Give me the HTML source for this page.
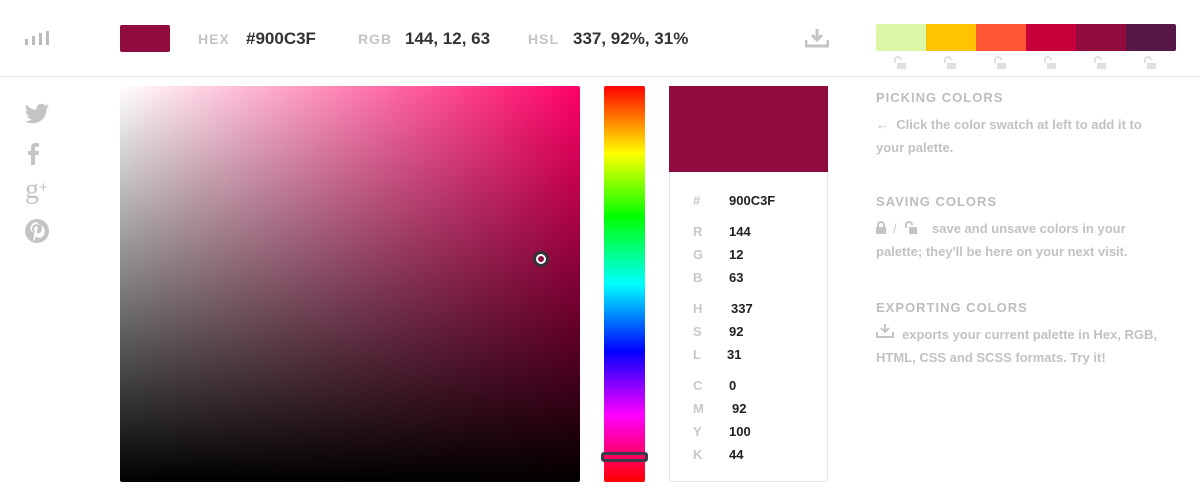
<!DOCTYPE html><html><head><style>
*{margin:0;padding:0;box-sizing:border-box}
body{width:1200px;height:498px;background:#fff;font-family:"Liberation Sans",sans-serif;position:relative;overflow:hidden}
.a{position:absolute}
.hdr{left:0;top:0;width:1200px;height:77px;border-bottom:1px solid #e6e6e6}
.lbl{color:#c4c4c4;font-weight:bold;font-size:14px;letter-spacing:1px}
.val{color:#333;font-weight:bold;font-size:17px}
.r{font-size:13px;font-weight:bold}
.r .k{position:absolute;left:24px;color:#c8c8c8}
.r .v{position:absolute;left:60px;color:#222}
.side{color:#c2c2c2;font-size:13px;line-height:23px;font-weight:bold}
.side h4{font-size:13px;letter-spacing:1px;color:#bdbdbd;margin-bottom:4px;font-weight:900}
</style></head><body>
<div class="a hdr"></div>
<svg class="a" style="left:25px;top:31px" width="24" height="14"><rect x="0" y="8" width="3" height="6" fill="#bbb"/><rect x="7" y="5" width="3" height="9" fill="#bbb"/><rect x="14" y="2" width="3" height="12" fill="#bbb"/><rect x="21" y="0" width="3" height="14" fill="#bbb"/></svg>
<div class="a" style="left:120px;top:25px;width:50px;height:27px;background:#900C3F;border-radius:2px"></div>
<div class="a lbl" style="left:198px;top:31px">HEX</div>
<div class="a val" style="left:246px;top:29px">#900C3F</div>
<div class="a lbl" style="left:358px;top:31px">RGB</div>
<div class="a val" style="left:405px;top:29px">144, 12, 63</div>
<div class="a lbl" style="left:528px;top:31px">HSL</div>
<div class="a val" style="left:573px;top:29px">337, 92%, 31%</div>
<svg class="a" style="left:805px;top:28px" width="24" height="21"><path d="M12 1v11M7 7l5 5 5-5" stroke="#c4c4c4" stroke-width="3" fill="none"/><path d="M1 12v6h22v-6" stroke="#c4c4c4" stroke-width="3" fill="none"/></svg>
<div class="a" style="left:876px;top:24px;width:300px;height:27px;border-radius:2px;overflow:hidden;display:flex">
<div style="flex:1;background:#DAF7A6"></div><div style="flex:1;background:#FFC300"></div><div style="flex:1;background:#FF5733"></div><div style="flex:1;background:#C70039"></div><div style="flex:1;background:#900C3F"></div><div style="flex:1;background:#581845"></div></div>
<svg class="a" style="left:876px;top:56px" width="300" height="14">
<g fill="#e0e0e0" stroke="#e0e0e0"><g id="l"><path d="M19 7V4a3 3 0 0 1 6 0" fill="none" stroke-width="2"/><rect x="21" y="7" width="9" height="6" stroke="none"/></g>
<use href="#l" x="50"/><use href="#l" x="100"/><use href="#l" x="150"/><use href="#l" x="200"/><use href="#l" x="250"/></g></svg>
<svg class="a" style="left:25px;top:103px" width="26" height="145" fill="#c4c4c4">
<path d="M24 3c-1 .5-2 .7-3 .8 1-.6 2-1.6 2.2-2.7-1 .6-2 1-3.2 1.2A5 5 0 0 0 11.5 6.8 14 14 0 0 1 1.5 1.7a5 5 0 0 0 1.5 6.6c-.8 0-1.6-.3-2.3-.6 0 2.4 1.7 4.400 4 4.900-.7.2-1.500.2-2.300.1.6 2 2.500 3.400 4.600 3.400A10 10 0 0 1 0 18.200 14 14 0 0 0 7.500 20.400c9 0 14-7.500 14-14v-.6c1-.7 1.800-1.600 2.500-2.600z"/>
<path d="M10 62v-10h3.500l.5-4H10v-2.500c0-1.100.3-1.900 1.900-1.900H14v-3.500c-.4 0-1.600-.2-3-.2-3 0-5 1.800-5 5.100V48H3v4h3v10z"/>
<text x="0" y="95" font-family="Liberation Serif" font-size="28" fill="#c4c4c4">g</text><text x="14" y="89" font-size="15" font-family="Liberation Sans" fill="#c4c4c4">+</text>
<circle cx="12" cy="128" r="12"/><path d="M12.500 119c-5 0-7 3.500-7 6.300 0 1.700.6 3.200 2 3.800l.4-.9c-.6-.7-.8-1.300-.8-2.200 0-2.800 2-5 5.300-5 2.800 0 4.400 1.700 4.400 4 0 3-1.300 5.500-3.300 5.500-1 0-1.900-.9-1.600-2 .3-1.300.9-2.700.9-3.700 0-.9-.5-1.600-1.500-1.600-1.200 0-2.100 1.200-2.100 2.800 0 1 .3 1.700.3 1.700L8.200 137.300l1 .6 2-4.500c.5.900 1.800 1.500 3 1.500 3.500 0 5.500-3 5.500-7.100 0-3.100-2.700-6-7.200-6z" fill="#fff"/></svg>
<div class="a" style="left:120px;top:86px;width:460px;height:396px;background:linear-gradient(to top,#000,rgba(0,0,0,0)),linear-gradient(to right,#fff,#ff0066);border-radius:2px"></div>
<div class="a" style="left:533px;top:251px;width:16px;height:16px;border-radius:50%;background:#fff;border:3px solid #333"><div style="margin:2px;width:6px;height:6px;border-radius:50%;background:#900C3F"></div></div>
<div class="a" style="left:604px;top:86px;width:41px;height:396px;border-radius:2px;background:linear-gradient(to bottom,#f00 0%,#ff0 17%,#0f0 33%,#0ff 50%,#00f 67%,#f0f 83%,#f00 100%)"></div>
<div class="a" style="left:601px;top:452px;width:47px;height:10px;border:3px solid #3a3a48;border-radius:3px"></div>
<div class="a" style="left:669px;top:86px;width:159px;height:396px;border:1px solid #e6e6e6;border-radius:2px"></div>
<div class="a" style="left:669px;top:86px;width:159px;height:86px;background:#900C3F"></div>
<div class="a r" style="left:669px;top:193px;width:159px">
<div style="position:relative;height:0"><span class="k">#</span><span class="v">900C3F</span></div>
<div style="position:relative;top:31px"><span class="k">R</span><span class="v">144</span></div>
<div style="position:relative;top:54px"><span class="k">G</span><span class="v">12</span></div>
<div style="position:relative;top:77px"><span class="k">B</span><span class="v">63</span></div>
<div style="position:relative;top:108px"><span class="k">H</span><span class="v" style="left:62px">337</span></div>
<div style="position:relative;top:131px"><span class="k">S</span><span class="v">92</span></div>
<div style="position:relative;top:154px"><span class="k">L</span><span class="v" style="left:58px">31</span></div>
<div style="position:relative;top:185px"><span class="k">C</span><span class="v">0</span></div>
<div style="position:relative;top:208px"><span class="k">M</span><span class="v" style="left:63px">92</span></div>
<div style="position:relative;top:231px"><span class="k">Y</span><span class="v">100</span></div>
<div style="position:relative;top:254px"><span class="k">K</span><span class="v">44</span></div>
</div>
<div class="a side" style="left:876px;top:86px;width:290px">
<h4>PICKING COLORS</h4><div>← &nbsp;Click the color swatch at left to add it to your palette.</div></div>
<div class="a side" style="left:876px;top:190px;width:270px">
<h4>SAVING COLORS</h4><div><span style="display:inline-block;width:56px"></span>save and unsave colors in your palette; they'll be here on your next visit.</div></div>
<svg class="a" style="left:876px;top:221px" width="56" height="14" fill="#c4c4c4"><path d="M2 6V4a3 3 0 0 1 6 0v2" stroke="#c4c4c4" stroke-width="2" fill="none"/><rect x="0" y="6" width="10" height="7"/><text x="17" y="12" font-size="13" font-family="Liberation Sans">/</text><path d="M30 7V4a3 3 0 0 1 6 0" stroke="#c4c4c4" stroke-width="2" fill="none"/><rect x="33" y="6" width="8" height="7"/></svg>
<div class="a side" style="left:876px;top:296px;width:300px">
<h4>EXPORTING COLORS</h4><div><span style="display:inline-block;width:26px"></span>exports your current palette in Hex, RGB, HTML, CSS and SCSS formats. Try it!</div></div>
<svg class="a" style="left:876px;top:323px" width="18" height="16"><path d="M9 1v8M5 5l4 4 4-4M1 9v5h16v-5" stroke="#c4c4c4" stroke-width="2" fill="none"/></svg>
</body></html>
